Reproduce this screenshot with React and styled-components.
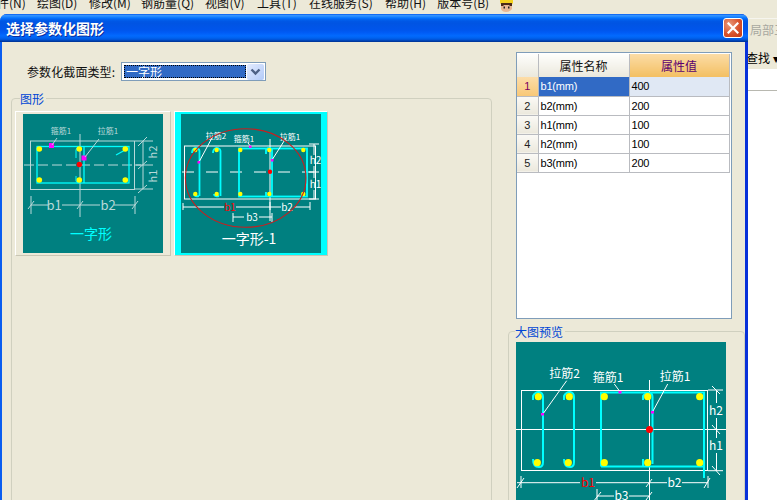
import React from "react";
import styled, { createGlobalStyle } from "styled-components";

const CJK = `"Noto Sans CJK SC", "Liberation Sans", sans-serif`;
const LATIN = `"Liberation Sans", sans-serif`;

const Global = createGlobalStyle`
  html, body { margin: 0; padding: 0; height: 500px; overflow: hidden; background: #ece9d8; }
  #root { height: 500px; }
`;

const Page = styled.div`
  width: 777px;
  height: 500px;
  display: flex;
  flex-direction: column;
  overflow: hidden;
  background: #ece9d8;
  font-family: ${CJK};
  font-size: 12px;
  color: #000;
`;

const MenuBar = styled.div`
  height: 14px;
  flex: none;
  overflow: hidden;
  display: flex;
  align-items: flex-end;
  gap: 12px;
  margin-left: -15px;
  line-height: 14px;
`;
const MenuItem = styled.span`
  white-space: nowrap;
  position: relative;
  top: -4px;
  color: #111;
`;
const Mnemonic = styled.span`
  display: inline-block;
  width: 16px;
  text-align: center;
`;
const Avatar = styled.svg`
  width: 16px;
  height: 12px;
  margin-left: -3px;
  align-self: flex-start;
  flex: none;
`;

const Work = styled.div`
  flex: 1;
  display: flex;
  min-height: 0;
`;

const Dialog = styled.div`
  width: 748px;
  flex: none;
  display: flex;
  flex-direction: column;
  background: linear-gradient(to right, #0a5df0 0, #0a5df0 50%, #0831d9 50%, #0831d9 100%);
  border-radius: 7px 7px 0 0;
  overflow: hidden;
`;
const TitleBar = styled.div`
  height: 28px;
  flex: none;
  display: flex;
  align-items: center;
  justify-content: space-between;
  padding: 0 5px 0 6px;
  background: linear-gradient(
    to bottom,
    #0058ee 0%, #3593ff 5%, #288eff 8%, #127dff 12%, #036ffc 16%, #0262ee 20%,
    #0057e5 26%, #0054e3 34%, #0055eb 56%, #005bf5 66%, #026afe 78%, #0062ef 86%,
    #0052d6 92%, #0040ab 96%, #003092 100%
  );
`;
const Title = styled.div`
  color: #fff;
  font-weight: 700;
  font-size: 14px;
  text-shadow: 1px 1px 0 #0a2f9c;
`;
const CloseButton = styled.div`
  width: 18px;
  height: 18px;
  border: 1px solid #fff;
  border-radius: 3px;
  display: flex;
  align-items: center;
  justify-content: center;
  background: radial-gradient(circle at 30% 30%, #e79a7c 0%, #d9522c 55%, #c03a14 100%);
`;

const Body = styled.div`
  flex: 1;
  min-height: 0;
  display: flex;
  overflow: hidden;
  background: #ece9d8;
  margin: 0 3px 0 2px;
  padding: 0 0 0 9px;
  gap: 16px;
`;
const LeftColumn = styled.div`
  width: 481px;
  flex: none;
  display: flex;
  flex-direction: column;
`;
const TypeRow = styled.div`
  display: flex;
  align-items: center;
  gap: 4px;
  margin: 20px 0 0 16px;
  height: 19px;
  flex: none;
`;
const TypeLabel = styled.div`
  width: 90px;
  white-space: nowrap;
  letter-spacing: 0.1px;
  color: #111;
`;
const Select = styled.div`
  width: 145px;
  height: 19px;
  box-sizing: border-box;
  border: 1px solid #7f9db9;
  background: #fff;
  display: flex;
  align-items: center;
  padding: 0 1px 0 2px;
  gap: 1px;
`;
const SelectValue = styled.div`
  flex: 1;
  height: 13px;
  box-sizing: border-box;
  border: 1px dotted #e8a020;
  outline: 1px dotted #000;
  outline-offset: -1px;
  background: #316ac5;
  color: #fff;
  line-height: 11px;
  padding-left: 1px;
`;
const SelectButton = styled.div`
  width: 17px;
  height: 16px;
  border-radius: 2px;
  background: linear-gradient(135deg, #e3ebfe, #b3cbf8);
  display: flex;
  align-items: center;
  justify-content: center;
`;

const Group = styled.fieldset`
  margin: ${(p) => p.$margin};
  padding: ${(p) => p.$padding};
  border: 1px solid #d0d0bf;
  border-radius: 4px;
  min-width: 0;
  height: ${(p) => p.$height}px;
  flex: none;
  box-sizing: border-box;
`;
const GroupLegend = styled.legend`
  padding: 0 2px 0 0;
  margin-left: ${(p) => p.$offset}px;
  color: #0046d5;
  font-size: 12px;
  line-height: 13px;
`;

const Gallery = styled.div`
  display: flex;
  gap: 3px;
`;
const Card = styled.div`
  width: ${(p) => p.$w}px;
  height: 145px;
  box-sizing: border-box;
  border: 1px solid #fff;
  border-right-color: #c9c6b4;
  border-bottom-color: #c9c6b4;
  background: ${(p) => (p.$selected ? "#00ffff" : "#ece9d8")};
  display: flex;
  align-items: center;
  justify-content: center;
  flex: none;
`;
const Drawing = styled.svg`
  display: block;
  background: #008080;
  flex: none;
`;

const RightColumn = styled.div`
  width: 237px;
  flex: none;
  display: flex;
  flex-direction: column;
`;
const TableFrame = styled.div`
  margin: 10px 0 0 8px;
  width: 216px;
  height: 267px;
  box-sizing: border-box;
  border: 1px solid #7f9db9;
  background: #fff;
  padding: 1px 0 0 0;
  flex: none;
`;
const Table = styled.table`
  border-collapse: collapse;
  table-layout: fixed;
  width: 212px;
`;
const HeadCell = styled.th`
  height: 23px;
  padding: 0;
  font-weight: 400;
  font-size: 12px;
  width: ${(p) => p.$w}px;
  box-sizing: border-box;
  border-right: 1px solid #b9bbc0;
  color: ${(p) => (p.$active ? "#5a0070" : "#111")};
  background: ${(p) =>
    p.$active
      ? "linear-gradient(#fbdca6, #f3bf62)"
      : "linear-gradient(#fefefc, #ebe8dc)"};
`;
const IndexCell = styled.td`
  height: 19px;
  padding: 0;
  box-sizing: border-box;
  text-align: center;
  font-family: ${LATIN};
  font-size: 11px;
  border-right: 1px solid #b9bbc0;
  border-bottom: 1px solid #b9bbc0;
  color: ${(p) => (p.$active ? "#7a0060" : "#222")};
  background: ${(p) =>
    p.$active
      ? "linear-gradient(#fddda8, #f8c878)"
      : "linear-gradient(#fbfaf6, #ebe8dc)"};
`;
const DataCell = styled.td`
  height: 19px;
  padding: 0 0 0 2px;
  box-sizing: border-box;
  font-family: ${LATIN};
  font-size: 11px;
  letter-spacing: -0.2px;
  border-right: 1px solid #b9bbc0;
  border-bottom: 1px solid #b9bbc0;
  color: ${(p) => (p.$selected ? "#fff" : "#000")};
  background: ${(p) => (p.$selected ? "#316ac5" : p.$tint ? "#e0e8f4" : "#fff")};
`;

const PreviewBox = styled.div`
  width: 210px;
  height: 170px;
  overflow: hidden;
`;

const SideStrip = styled.div`
  flex: 1;
  min-width: 0;
  display: flex;
  flex-direction: column;
  overflow: hidden;
  background: #ece9d8;
`;
const SideTab = styled.div`
  height: 26px;
  margin-top: 4px;
  padding-left: 2px;
  flex: none;
  color: #a8a8a0;
  white-space: nowrap;
  line-height: 22px;
  border-top: 1px solid #f6f5ee;
`;
const SideTool = styled.div`
  height: 22px;
  margin: 2px 0 0 -2px;
  flex: none;
  font-size: 12px;
  white-space: nowrap;
  line-height: 22px;
`;
const SideList = styled.div`
  flex: 1;
  background: #fff;
  &::before {
    content: "";
    display: block;
    height: 21px;
    border-bottom: 1px solid #b8b8b0;
  }
`;

const Y = "#ffff00";
const C = "#00ffff";
const Dots = ({ pts, r }) => pts.map(([x, y], i) => <circle key={i} cx={x} cy={y} r={r} fill={Y} />);
const L = ({ d, c = "#fff", w = 1, dash }) => <path d={d} stroke={c} strokeWidth={w} fill="none" strokeDasharray={dash} />;
const T = ({ x, y, s, c = "#fff", children, rotate, anchor = "middle" }) => (
  <text
    x={x}
    y={y}
    fontSize={s}
    fill={c}
    textAnchor={anchor}
    fontFamily={`"Noto Sans CJK SC", "Liberation Sans", sans-serif`}
    transform={rotate ? `rotate(${rotate} ${x} ${y})` : undefined}
  >
    {children}
  </text>
);

function SectionOne() {
  const gray = "#b9d9d9";
  return (
    <Drawing width="140" height="139" viewBox="0 0 140 139">
      <L d="M57 20V103" c={gray} />
      <L d="M1 51H118" c={gray} dash="10 4" />
      <rect x="7.5" y="27" width="104" height="48.5" fill="none" stroke={gray} />
      <rect x="14" y="32.5" width="92" height="36.5" fill="none" stroke={C} strokeWidth="1.3" />
      <L d="M61 32V69" c={C} w={1.3} />
      <L d="M53 44V36Q53 33 57 33M53 62V67Q53 69 57 69" c={C} />
      <L d="M93 41L104 35" c={C} w={1.3} />
      <Dots pts={[[16.3, 35], [56.3, 35], [102.3, 35], [16.3, 66], [56.3, 66], [102.3, 66]]} r={2.8} />
      <rect x="26" y="29" width="5" height="5" fill="#ff00ff" />
      <rect x="58.5" y="41.5" width="5" height="5" fill="#ff00ff" />
      <circle cx="56.3" cy="50.5" r="2.7" fill="#ff0000" />
      <L d="M34 24L29 31M76 25L62 43" c={gray} />
      <T x="38" y="20" s={8} c={gray}>箍筋1</T>
      <T x="85" y="20" s={8} c={gray}>拉筋1</T>
      <L d="M8 82V100M112 82V100M5 95L11 87M54 95L60 87M109 95L115 87" c={gray} />
      <L d="M8 91H25M39 91H77M91 91H112" c={gray} />
      <T x="31" y="96" s={13} c={gray}>b1</T>
      <T x="85" y="96" s={13} c={gray}>b2</T>
      <L d="M120 27V75M115 32L124 23M115 55L124 47M115 79L124 71M112 27H130M112 51H130M112 75H130" c={gray} />
      <T x="134" y="38" s={11} c={gray} rotate={-90}>h2</T>
      <T x="134" y="62" s={11} c={gray} rotate={-90}>h1</T>
      <T x="68" y="125" s={14} c={C}>一字形</T>
    </Drawing>
  );
}

function SectionTwo() {
  return (
    <Drawing width="140" height="139" viewBox="0 0 140 139">
      <rect x="3.5" y="32" width="131" height="53" fill="none" stroke="#fff" />
      <L d="M1 58H140" dash="12 12" />
      <L d="M89 25V107" />
      <rect x="58" y="34.5" width="68" height="48" fill="none" stroke={C} strokeWidth="1.8" />
      <L d="M18.5 82V37Q18 34 14 34Q11 35 11 39M13 80Q13 83 18 82" c={C} w={1.8} />
      <L d="M39.5 82V37Q39 34 35 34Q32 35 32 39M33 80Q33 83 38 82" c={C} w={1.8} />
      <L d="M91 34V82M85 40V36Q86 34 90 34M85 78V82" c={C} w={1.8} />
      <Dots pts={[14.3, 35.7, 59.3, 88.3, 122.3].flatMap((x) => [[x, 36], [x, 80]])} r={2.2} />
      <circle cx="89" cy="57.7" r="2.2" fill="#ff0000" />
      <L d="M32 22L18 48M67 29L70 33M105 24L91 46" />
      <rect x="16.5" y="47" width="2.5" height="2.5" fill="#ff00ff" />
      <rect x="68" y="31.5" width="2.5" height="2.5" fill="#ff00ff" />
      <rect x="90" y="45" width="2.5" height="2.5" fill="#ff00ff" />
      <T x="35" y="25" s={8}>拉筋2</T>
      <T x="63" y="28" s={8}>箍筋1</T>
      <T x="109" y="26" s={8}>拉筋1</T>
      <L d="M2 93H43M55 93H100M113 93H129M2 89V96M89 88V96M129 88V96" />
      <T x="49" y="97" s={10} c="#ff0000">b1</T>
      <T x="106" y="97" s={10}>b2</T>
      <L d="M52 103H63M78 103H91M52 99V108M91 99V108" />
      <T x="71" y="107" s={10}>b3</T>
      <L d="M133 30V41M133 52V64M133 76V85M128 30H138M128 58H138M128 85H138" />
      <T x="134.5" y="50" s={10}>h2</T>
      <T x="134.5" y="74" s={10}>h1</T>
      <ellipse cx="64.7" cy="64" rx="60.3" ry="49.3" fill="none" stroke="#c81e1e" strokeWidth="1.1" />
      <T x="68" y="130" s={14}>一字形-1</T>
    </Drawing>
  );
}

function SectionLarge() {
  const top = [22.3, 53.3, 88.3, 131.7, 183.7].map((x) => [x, 54.7]);
  const bottom = [21.3, 52.3, 88.3, 131.7, 183.7].map((x) => [x, 120.7]);
  return (
    <Drawing width="210" height="170" viewBox="0 0 210 170">
      <rect x="5.5" y="48.5" width="186" height="80" fill="none" stroke="#fff" />
      <L d="M0 87.5H210M133.5 38V170" />
      <path d="M85 124.5V50.5H188V136M85 124.5H188" stroke={C} strokeWidth="2" fill="none" />
      <path d="M17 58V54Q19 50 23 50Q27 51 27 55V120Q27 125 23 125Q17 125 17 117" stroke={C} strokeWidth="2" fill="none" />
      <path d="M48 58V54Q50 50 54 50Q58 51 58 55V120Q58 125 54 125Q48 125 48 117" stroke={C} strokeWidth="2" fill="none" />
      <path d="M127 58V54Q129 51 133 51Q136.5 51 136.5 55V122M127 117V124" stroke={C} strokeWidth="2" fill="none" />
      <Dots pts={[...top, ...bottom]} r={3.6} />
      <circle cx="133.5" cy="87.5" r="3.5" fill="#ff0000" />
      <L d="M50.7 38.7L26.7 72.3M98.3 42L104 49.7M151.7 42L136.3 70.3" />
      <rect x="25" y="71" width="3" height="2.5" fill="#ff00ff" />
      <rect x="102.5" y="49" width="3" height="2.5" fill="#ff00ff" />
      <rect x="135" y="69" width="3" height="2.5" fill="#ff00ff" />
      <T x="48.5" y="36" s={12}>拉筋2</T>
      <T x="92" y="40" s={12}>箍筋1</T>
      <T x="159" y="39" s={12}>拉筋1</T>
      <L d="M1 140.7H64M80 140.7H151M166 140.7H192M5 134V146M1 146L8 136M133.5 134V146M130 145L136 137M192 134V146M188 146L194 136" />
      <T x="72" y="145" s={12} c="#ff0000">b1</T>
      <T x="158.5" y="145" s={12}>b2</T>
      <L d="M81 154H98M113 154H133M81 147V170M77 160L85 150M130 158L136 150" />
      <T x="105.5" y="158" s={12}>b3</T>
      <L d="M200.5 48V61M200.5 76V96M200.5 111V128.7M192 48H207M192 87.5H207M192 128.7H207M196 44L204 52M196 83L204 92M196 124L204 133" />
      <T x="200" y="73" s={12}>h2</T>
      <T x="200" y="108" s={12}>h1</T>
    </Drawing>
  );
}

const rows = [
  ["b1(mm)", "400"],
  ["b2(mm)", "200"],
  ["h1(mm)", "100"],
  ["h2(mm)", "100"],
  ["b3(mm)", "200"],
];
const menus = [
  ["文件", "N"], ["绘图", "D"], ["修改", "M"], ["钢筋量", "Q"], ["视图", "V"],
  ["工具", "T"], ["在线服务", "S"], ["帮助", "H"], ["版本号", "B"],
];

export default function App() {
  return (
    <Page>
      <Global />
      <MenuBar>
        {menus.map(([name, key]) => (
          <MenuItem key={key}>
            {name}
            <Mnemonic>({key})</Mnemonic>
          </MenuItem>
        ))}
        <Avatar viewBox="0 0 16 12">
          <path d="M2 0H15V3Q14 5 13 5H4Q2 4 2 2Z" fill="#f3d21f" />
          <path d="M3 4H14V9Q12 12 8 12Q4 12 3 9Z" fill="#e8b894" />
          <path d="M3 3H14V6H12L11 5H6L5 6H3Z" fill="#4a2a18" />
          <rect x="5.5" y="6.5" width="1.5" height="2" fill="#222" />
          <rect x="10" y="6.5" width="1.5" height="2" fill="#222" />
        </Avatar>
      </MenuBar>
      <Work>
        <Dialog>
          <TitleBar>
            <Title>选择参数化图形</Title>
            <CloseButton>
              <svg width="12" height="12" viewBox="0 0 12 12">
                <path d="M1.5 1.5L10.5 10.5M10.5 1.5L1.5 10.5" stroke="#fff" strokeWidth="2.2" strokeLinecap="square" />
              </svg>
            </CloseButton>
          </TitleBar>
          <Body>
            <LeftColumn>
              <TypeRow>
                <TypeLabel>参数化截面类型:</TypeLabel>
                <Select>
                  <SelectValue>一字形</SelectValue>
                  <SelectButton>
                    <svg width="11" height="8" viewBox="0 0 11 8">
                      <path d="M1.5 1.5L5.5 5.5L9.5 1.5" stroke="#4d6185" strokeWidth="2.4" fill="none" />
                    </svg>
                  </SelectButton>
                </Select>
              </TypeRow>
              <Group $margin="11px 0 0 0" $padding="6px 0 0 3px" $height={420}>
                <GroupLegend $offset={5}>图形</GroupLegend>
                <Gallery>
                  <Card $w={156}><SectionOne /></Card>
                  <Card $w={154} $selected><SectionTwo /></Card>
                </Gallery>
              </Group>
            </LeftColumn>
            <RightColumn>
              <TableFrame>
                <Table>
                  <thead>
                    <tr>
                      <HeadCell $w={21} />
                      <HeadCell $w={91}>属性名称</HeadCell>
                      <HeadCell $w={100} $active>属性值</HeadCell>
                    </tr>
                  </thead>
                  <tbody>
                    {rows.map(([name, value], i) => (
                      <tr key={name}>
                        <IndexCell $active={i === 0}>{i + 1}</IndexCell>
                        <DataCell $selected={i === 0}>{name}</DataCell>
                        <DataCell $tint={i === 0}>{value}</DataCell>
                      </tr>
                    ))}
                  </tbody>
                </Table>
              </TableFrame>
              <Group $margin="6px 0 0 0" $padding="4px 0 0 7px" $height={200}>
                <GroupLegend $offset={-1}>大图预览</GroupLegend>
                <PreviewBox><SectionLarge /></PreviewBox>
              </Group>
            </RightColumn>
          </Body>
        </Dialog>
        <SideStrip>
          <SideTab>局部三维</SideTab>
          <SideTool>查找 ▾</SideTool>
          <SideList />
        </SideStrip>
      </Work>
    </Page>
  );
}
